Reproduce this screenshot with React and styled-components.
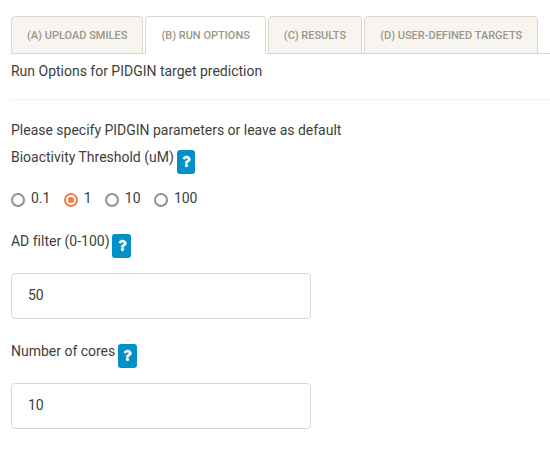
import React, { useState } from "react";
import styled, { createGlobalStyle } from "styled-components";
import { FaQuestion } from "react-icons/fa";

const GlobalStyle = createGlobalStyle`
  *, *::before, *::after { box-sizing: border-box; }
  body {
    margin: 0;
    background: #fff;
    color: #3e3f3a;
    font: 400 14px/20px Roboto, sans-serif;
    letter-spacing: -0.01px;
    overflow: hidden;
  }
`;

const Page = styled.main`
  display: flow-root;
  padding: 16px 0 0 11px;
`;

const TabBar = styled.nav`
  display: flex;
  gap: 2px;
  height: 38px;
  border-bottom: 1px solid #dfd7ca;
`;

const Tab = styled.button`
  flex: none;
  height: 38px;
  margin: 0;
  padding: 2px 15px 0;
  border: 1px solid #dfd7ca;
  border-bottom-color: ${(p) => (p.$active ? "#fff" : "#dfd7ca")};
  border-radius: 4px 4px 0 0;
  background: ${(p) => (p.$active ? "#fff" : "#f8f5f0")};
  color: #98978b;
  font: 500 11px/22px Roboto, sans-serif;
  text-transform: uppercase;
  white-space: nowrap;
`;

const Heading = styled.p`
  margin: 7px 0 18px;
`;

const Divider = styled.hr`
  margin: 0 0 20px;
  border: 0;
  border-top: 1px solid #f3f3f1;
`;

const Intro = styled.p`
  margin: 0;
`;

const LabelRow = styled.div`
  display: flex;
  align-items: flex-start;
  gap: 2.8px;
  height: 27px;
  margin-top: ${(p) => p.$top}px;
`;

const HelpButton = styled.button`
  display: flex;
  align-items: center;
  justify-content: center;
  width: 18.8px;
  height: 24px;
  margin: 3px 0 0;
  padding: 0 0 1px 1px;
  border: 0;
  border-radius: 3px;
  background: #0191c8;
  color: #fff;
  font-size: 11px;

  svg {
    stroke: currentColor;
    stroke-width: 22px;
    overflow: visible;
  }
`;

const RadioGroup = styled.div`
  display: flex;
  height: 20px;
  margin-top: 14px;
`;

const RadioLabel = styled.label`
  display: flex;
  align-items: flex-start;
  gap: 6px;
  margin-right: 13.3px;
`;

const Radio = styled.input`
  appearance: none;
  flex: none;
  width: 14px;
  height: 14px;
  margin: 5px 0 0;
  border: 2px solid #8f8f9d;
  border-radius: 50%;
  background: #fff;

  &:checked {
    border-color: #f47c48;
    background: radial-gradient(circle, #f47c48 0 2.8px, #fff 3.5px);
  }
`;

const TextInput = styled.input`
  display: block;
  width: 300px;
  height: 46px;
  margin-top: 15px;
  padding: 0 16px 2px;
  border: 1px solid #dfd7ca;
  border-radius: 4px;
  background: #fff;
  color: #3e3f3a;
  font: 400 14px/20px Roboto, sans-serif;
  outline: none;
`;

const tabs = ["(A) Upload SMILES", "(B) Run options", "(C) Results", "(D) User-defined targets"];
const thresholds = ["0.1", "1", "10", "100"];

function FieldLabel({ children, top }) {
  return (
    <LabelRow $top={top}>
      <span>{children}</span>
      <HelpButton type="button" aria-label={`Help: ${children}`}>
        <FaQuestion />
      </HelpButton>
    </LabelRow>
  );
}

export default function App() {
  const [tab, setTab] = useState(1);
  const [threshold, setThreshold] = useState("1");

  return (
    <>
      <GlobalStyle />
      <Page>
        <TabBar>
          {tabs.map((name, i) => (
            <Tab key={name} $active={i === tab} onClick={() => setTab(i)}>
              {name}
            </Tab>
          ))}
        </TabBar>
        <Heading>Run Options for PIDGIN target prediction</Heading>
        <Divider />
        <Intro>Please specify PIDGIN parameters or leave as default</Intro>
        <FieldLabel top={7}>Bioactivity Threshold (uM)</FieldLabel>
        <RadioGroup>
          {thresholds.map((value) => (
            <RadioLabel key={value}>
              <Radio
                type="radio"
                name="threshold"
                value={value}
                checked={threshold === value}
                onChange={() => setThreshold(value)}
              />
              {value}
            </RadioLabel>
          ))}
        </RadioGroup>
        <FieldLabel top={23}>AD filter (0-100)</FieldLabel>
        <TextInput defaultValue="50" aria-label="AD filter" />
        <FieldLabel top={22}>Number of cores</FieldLabel>
        <TextInput defaultValue="10" aria-label="Number of cores" />
      </Page>
    </>
  );
}
